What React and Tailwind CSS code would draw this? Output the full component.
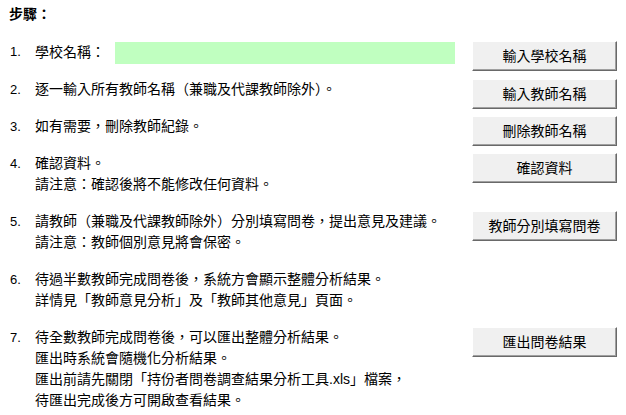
const font = { fontFamily: '"Liberation Sans", "Noto Sans CJK TC", sans-serif' }

function Btn({ children }) {
  return (
    <div className="w-[145px] h-[30px] shrink-0 flex items-center justify-center bg-[#f0f0f0] border border-t-white border-l-white border-r-[#696969] border-b-[#696969] shadow-[inset_-1px_-1px_0_#a0a0a0] text-[14px] text-black">
      {children}
    </div>
  )
}

function Step({ n, lines, button, height, children }) {
  return (
    <div className="flex items-start" style={{ height }}>
      <div className="w-[35px] pl-[10px] shrink-0 leading-[21px] text-[13px]">{n}.</div>
      <div className="flex-1 leading-[21px]">
        {children ||
          lines.map((l, i) => (
            <div key={i} className="whitespace-nowrap">{l}</div>
          ))}
      </div>
      <div className="w-[154px] shrink-0">{button && <Btn>{button}</Btn>}</div>
    </div>
  )
}

export default function App() {
  return (
    <div className="w-[626px] h-[415px] bg-white text-black text-[14px] overflow-hidden" style={font}>
      <div className="pt-[4px] pl-[9px] h-[41px] leading-[21px] font-bold">步驟：</div>

      <Step n={1} button="輸入學校名稱" height={38}>
        <div className="flex items-center h-[21px] mt-[1px]">
          <span className="w-[80px]">學校名稱：</span>
          <div className="w-[340px] h-[22px] bg-[#c0ffc0]" />
        </div>
      </Step>

      <Step n={2} button="輸入教師名稱" height={37} lines={['逐一輸入所有教師名稱（兼職及代課教師除外）。']} />

      <Step n={3} button="刪除教師名稱" height={37} lines={['如有需要，刪除教師紀錄。']} />

      <Step
        n={4}
        button="確認資料"
        height={58}
        lines={['確認資料。', '請注意：確認後將不能修改任何資料。']}
      />

      <Step
        n={5}
        button="教師分別填寫問卷"
        height={58}
        lines={['請教師（兼職及代課教師除外）分別填寫問卷，提出意見及建議。', '請注意：教師個別意見將會保密。']}
      />

      <Step
        n={6}
        height={58}
        lines={['待過半數教師完成問卷後，系統方會顯示整體分析結果。', '詳情見「教師意見分析」及「教師其他意見」頁面。']}
      />

      <Step
        n={7}
        button="匯出問卷結果"
        height={88}
        lines={[
          '待全數教師完成問卷後，可以匯出整體分析結果。',
          '匯出時系統會隨機化分析結果。',
          '匯出前請先關閉「持份者問卷調查結果分析工具.xls」檔案，',
          '待匯出完成後方可開啟查看結果。',
        ]}
      />
    </div>
  )
}
